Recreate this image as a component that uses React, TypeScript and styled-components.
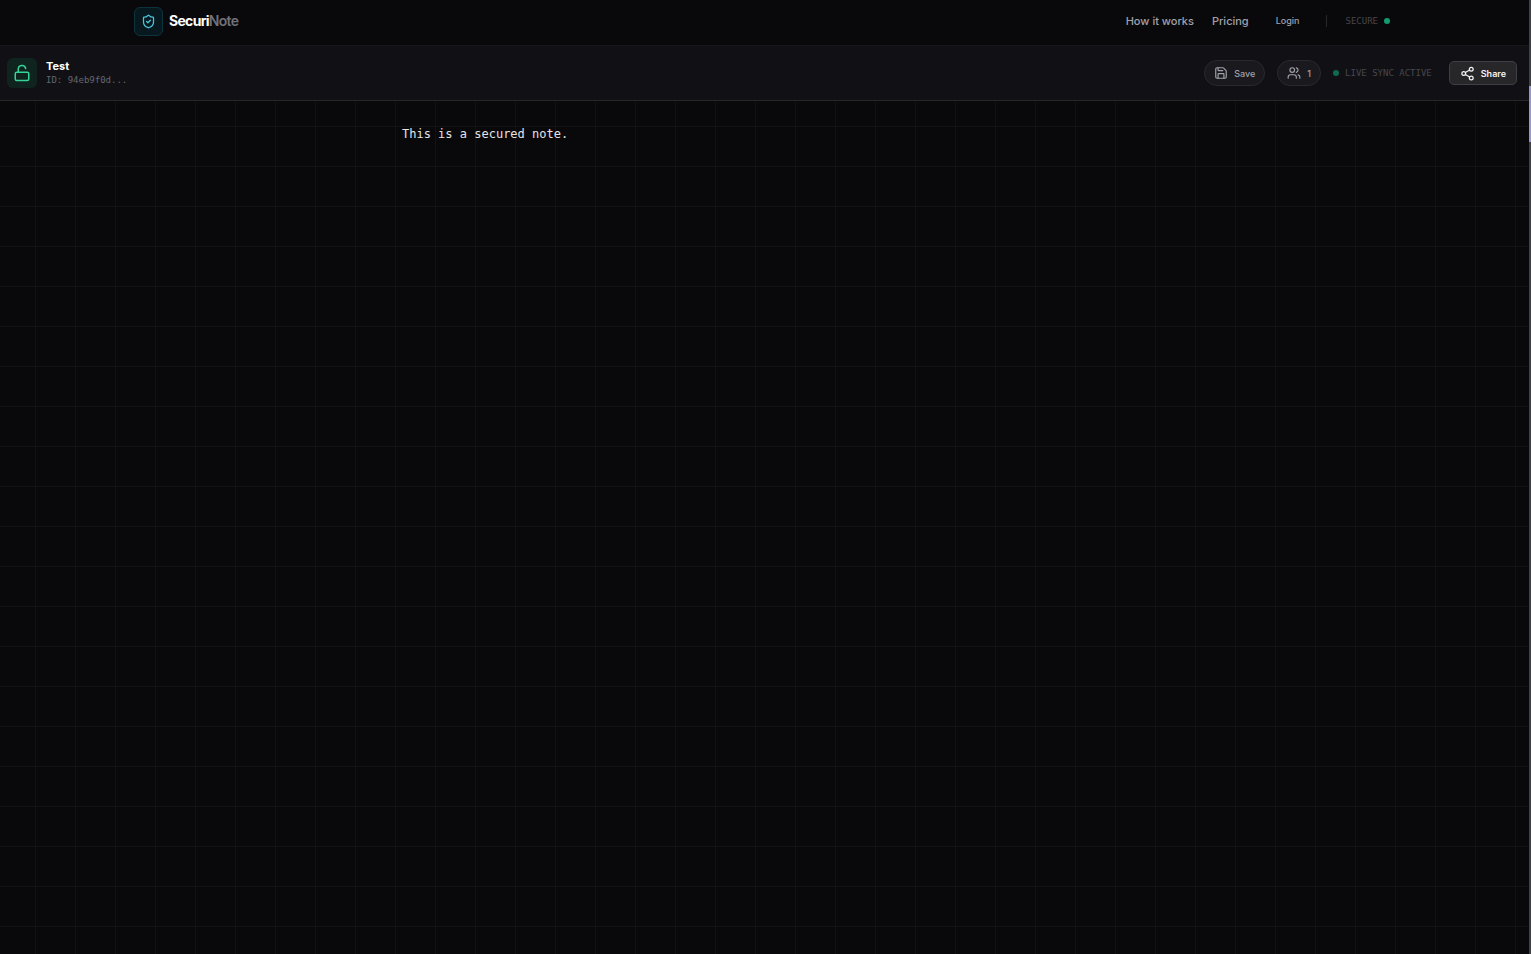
import React from "react";
import styled, { createGlobalStyle } from "styled-components";
import { LockOpen, Save, Share2, ShieldCheck, Users } from "lucide-react";

const sans = `Inter, "Liberation Sans", sans-serif`;
const mono = `"DejaVu Sans Mono", "Liberation Mono", monospace`;

const GlobalStyle = createGlobalStyle`
  *, *::before, *::after { box-sizing: border-box; }
  body { margin: 0; background: #09090b; color: #fff; font-family: ${sans}; }
  button { font-family: inherit; margin: 0; cursor: pointer; }
  a { text-decoration: none; color: inherit; }
`;

const Page = styled.div`
  min-height: 100vh;
  display: flex;
  flex-direction: column;
  border-right: 2px solid #3f3f46;
  position: relative;
`;

const ScrollThumb = styled.div`
  position: absolute;
  top: 86px;
  right: -2px;
  width: 2px;
  height: 56px;
  background: #9797c8;
`;

const SiteHeader = styled.header`
  height: 46px;
  border-bottom: 1px solid #17171b;
  padding: 0 16px;
`;

const HeaderInner = styled.div`
  max-width: 1261px;
  height: 42px;
  margin: 0 auto;
  display: flex;
  align-items: center;
  justify-content: space-between;
`;

const Brand = styled.a`
  display: flex;
  align-items: center;
  gap: 6px;
  font-size: 14px;
  line-height: 20px;
  font-weight: 700;
  letter-spacing: -0.05em;
  color: #fff;
`;

const BrandMark = styled.span`
  width: 29px;
  height: 29px;
  display: grid;
  place-items: center;
  border: 1px solid #0d333c;
  border-radius: 6px;
  background: #07191f;
  color: #4cc5dc;
`;

const BrandMuted = styled.span`
  color: #71717a;
  font-weight: 600;
`;

const Nav = styled.nav`
  display: flex;
  align-items: center;
  padding-right: 5px;
`;

const NavLink = styled.a`
  margin-right: 18px;
  font-size: 11px;
  line-height: 16px;
  font-weight: 500;
  color: #a1a1aa;
`;

const LoginButton = styled.button`
  padding: 4px 9px;
  border: 0;
  background: none;
  font-size: 9px;
  line-height: 14px;
  font-weight: 500;
  color: #a1a1aa;
`;

const Divider = styled.span`
  width: 1px;
  height: 12px;
  margin: 0 18px;
  background: #27272a;
`;

const Status = styled.span<{ $reverse?: boolean }>`
  display: flex;
  align-items: center;
  flex-direction: ${(p) => (p.$reverse ? "row-reverse" : "row")};
  gap: 6px;
  font-family: ${mono};
  font-size: 9px;
  line-height: 14px;
  color: #46464d;
`;

const Dot = styled.span<{ $dim?: boolean }>`
  width: 6px;
  height: 6px;
  border-radius: 50%;
  background: ${(p) => (p.$dim ? "#106a4e" : "#109e70")};
`;

const NoteBar = styled.section`
  height: 55px;
  padding: 0 12px 0 7px;
  display: flex;
  align-items: center;
  justify-content: space-between;
  background: #111115;
  border-bottom: 1px solid #27272a;
`;

const NoteInfo = styled.div`
  display: flex;
  align-items: center;
  gap: 9px;
`;

const LockBadge = styled.span`
  width: 30px;
  height: 30px;
  display: grid;
  place-items: center;
  border-radius: 6px;
  background: #10241f;
  color: #34d399;
`;

const NoteTitle = styled.h1`
  margin: 0;
  font-size: 11px;
  line-height: 14px;
  font-weight: 700;
  color: #fff;
`;

const NoteId = styled.p`
  margin: 0;
  font-family: ${mono};
  font-size: 9px;
  line-height: 14px;
  color: #66666e;
`;

const Actions = styled.div`
  display: flex;
  align-items: center;
  gap: 12px;
`;

const PillButton = styled.button`
  height: 26px;
  padding: 0 9px;
  display: flex;
  align-items: center;
  gap: 6px;
  border: 1px solid #29292e;
  border-radius: 13px;
  background: #1a1a1e;
  font-size: 9px;
  font-weight: 500;
  color: #a1a1aa;
`;

const ShareButton = styled.button`
  height: 24px;
  margin-left: 5px;
  padding: 0 10px;
  display: flex;
  align-items: center;
  gap: 6px;
  border: 1px solid #3f3f46;
  border-radius: 5px;
  background: #27272a;
  font-size: 9px;
  font-weight: 600;
  color: #f4f4f5;
`;

const Editor = styled.main`
  flex: 1;
  display: flex;
  background-image:
    linear-gradient(to right, #121215 1px, transparent 1px),
    linear-gradient(to bottom, #121215 1px, transparent 1px);
  background-size: 40px 40px;
  background-position: 35px 25px;
`;

const NoteText = styled.article`
  width: 100%;
  max-width: 725px;
  margin: 0 auto;
  padding: 23px 0;
  font-family: ${mono};
  font-size: 12px;
  line-height: 20px;
  color: #e4e4e7;
`;

export default function App() {
  return (
    <>
      <GlobalStyle />
      <Page>
        <SiteHeader>
          <HeaderInner>
            <Brand href="#">
              <BrandMark><ShieldCheck size={15} /></BrandMark>
              <span>Securi<BrandMuted>Note</BrandMuted></span>
            </Brand>
            <Nav>
              <NavLink href="#how">How it works</NavLink>
              <NavLink href="#pricing">Pricing</NavLink>
              <LoginButton type="button">Login</LoginButton>
              <Divider />
              <Status>SECURE<Dot /></Status>
            </Nav>
          </HeaderInner>
        </SiteHeader>
        <NoteBar>
          <NoteInfo>
            <LockBadge><LockOpen size={18} /></LockBadge>
            <div>
              <NoteTitle>Test</NoteTitle>
              <NoteId>ID: 94eb9f0d...</NoteId>
            </div>
          </NoteInfo>
          <Actions>
            <PillButton type="button"><Save size={14} />Save</PillButton>
            <PillButton type="button"><Users size={14} />1</PillButton>
            <Status $reverse>LIVE SYNC ACTIVE<Dot $dim /></Status>
            <ShareButton type="button"><Share2 size={15} />Share</ShareButton>
          </Actions>
        </NoteBar>
        <Editor>
          <NoteText>This is a secured note.</NoteText>
        </Editor>
        <ScrollThumb />
      </Page>
    </>
  );
}
